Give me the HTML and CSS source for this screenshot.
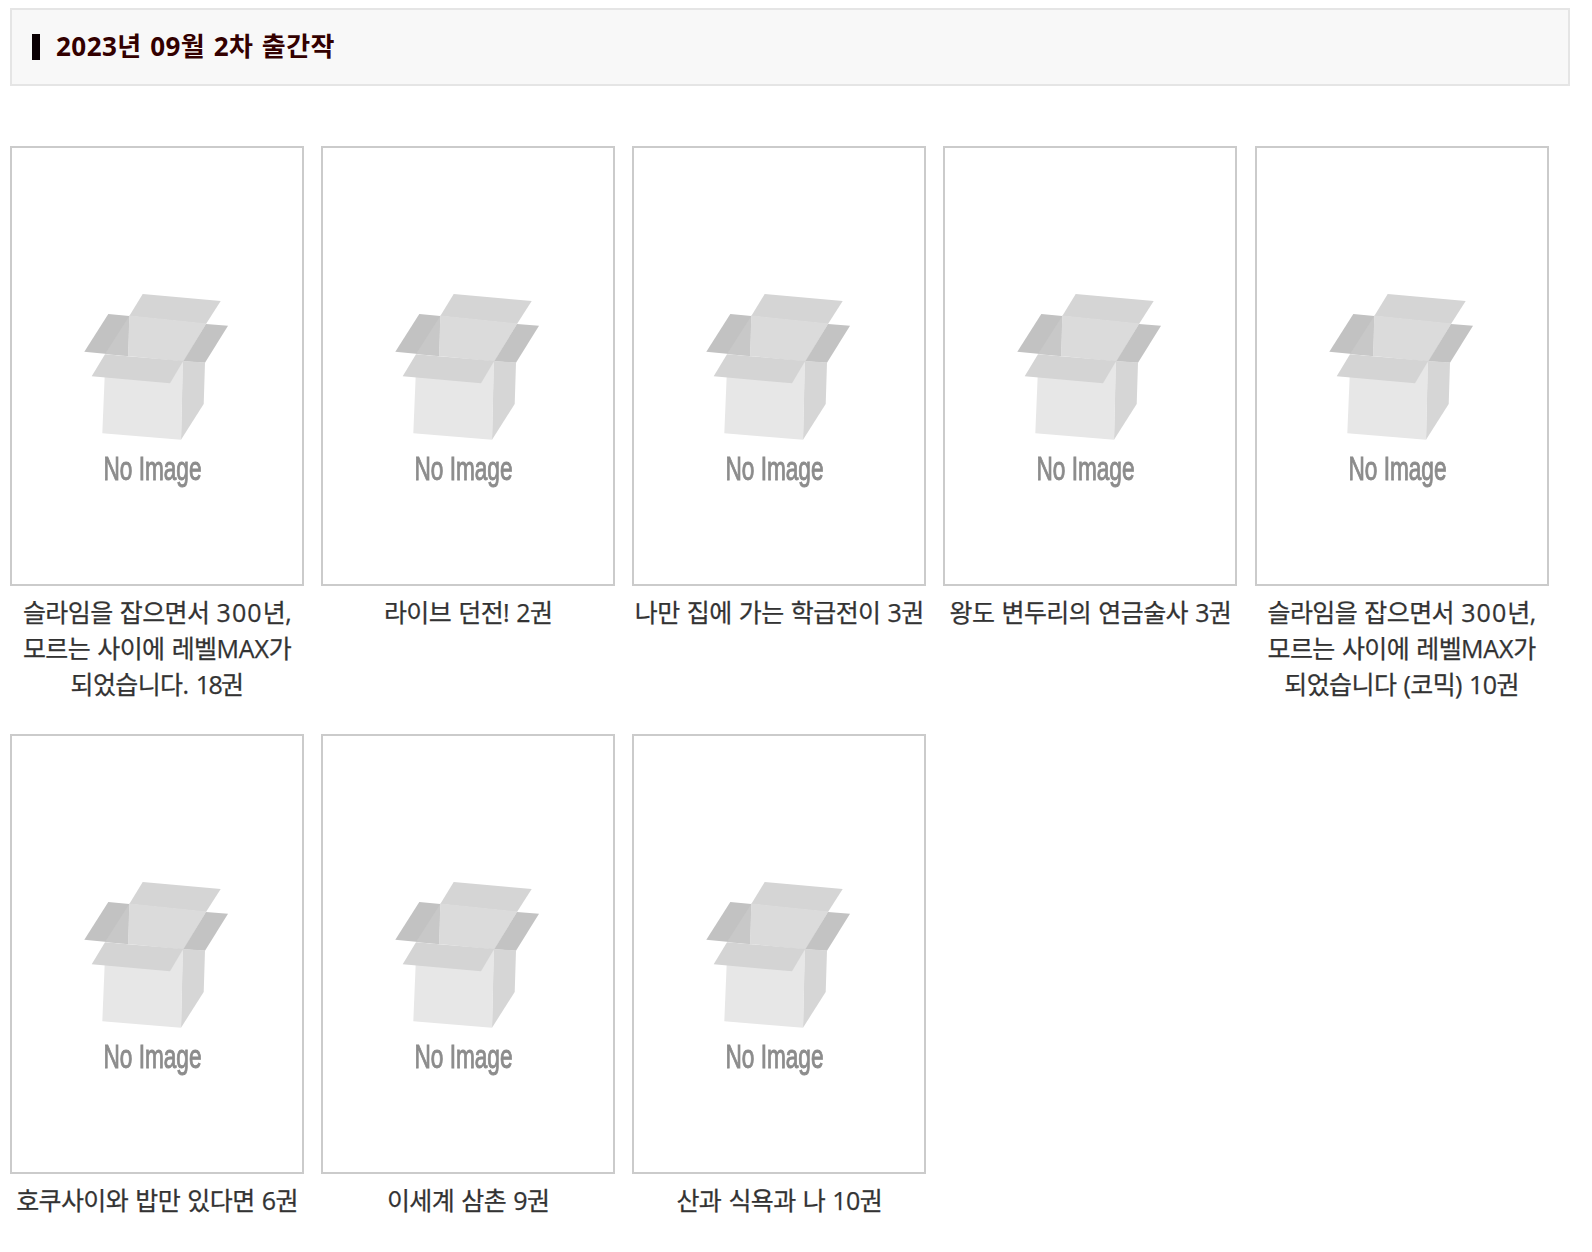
FILE: index.html
```
<!DOCTYPE html>
<html lang="ko">
<head>
  <meta charset="utf-8">
  <meta name="viewport" content="width=device-width">
  <title>2023년 09월 2차 출간작</title>
  <link rel="stylesheet" href="styles.css">
</head>
<body>
  <svg class="defs" width="0" height="0">
    <symbol id="no-image" viewBox="0 0 290 436" overflow="visible">
      <path fill="#d5d5d5" d="M130.7 146l78 7-14.7 23-76.7-8z"/>
      <path fill="#c2c2c2" d="M96.3 166l21 2-1.3 40-43.7-4.3z"/>
      <path fill="#c8c8c8" d="M117.3 168L116 208l-23-2z"/>
      <path fill="#dbdbdb" d="M117.3 167.5l77 8-22.7 38L116 208z"/>
      <path fill="#c3c3c3" d="M194 176l22 1.7-23 37-21.7-1.4z"/>
      <path fill="#d6d6d6" d="M170.7 213l22.3 1.4-1.3 41.6-22.7 35.7z"/>
      <path fill="#e7e7e7" d="M92.7 228l65.3 6 13-21-2 78.7-78.7-6.4z"/>
      <path fill="#d4d4d4" d="M93 206.2l78.3 6.8L158 235.3l-78.3-7z"/>
      <text class="no-image-text" x="91.5" y="332" textLength="98" lengthAdjust="spacingAndGlyphs">No Image</text>
    </symbol>
  </svg>

  <h2 class="title">2023년 09월 2차 출간작</h2>

  <ul class="books">
    <li class="book">
      <svg class="cover"><use href="#no-image"/></svg>
      <p class="name">슬라임을 잡으면서 <span class="num">300</span>년,<br>모르는 사이에 레벨<span class="latin">MAX</span>가<br>되었습니다. <span class="narrow">18</span>권</p>
    </li>
    <li class="book">
      <svg class="cover"><use href="#no-image"/></svg>
      <p class="name">라이브 던전! 2권</p>
    </li>
    <li class="book">
      <svg class="cover"><use href="#no-image"/></svg>
      <p class="name">나만 집에 가는 학급전이 3권</p>
    </li>
    <li class="book">
      <svg class="cover"><use href="#no-image"/></svg>
      <p class="name">왕도 변두리의 연금술사 3권</p>
    </li>
    <li class="book">
      <svg class="cover"><use href="#no-image"/></svg>
      <p class="name">슬라임을 잡으면서 <span class="num">300</span>년,<br>모르는 사이에 레벨<span class="latin">MAX</span>가<br>되었습니다 (코믹) 10권</p>
    </li>
    <li class="book">
      <svg class="cover"><use href="#no-image"/></svg>
      <p class="name">호쿠사이와 밥만 있다면 6권</p>
    </li>
    <li class="book">
      <svg class="cover"><use href="#no-image"/></svg>
      <p class="name">이세계 삼촌 9권</p>
    </li>
    <li class="book">
      <svg class="cover"><use href="#no-image"/></svg>
      <p class="name">산과 식욕과 나 10권</p>
    </li>
  </ul>
</body>
</html>
```
FILE: styles.css
```
* {
  box-sizing: border-box;
}

body {
  margin: 0;
  padding: 8px 22px 0 10px;
  background: #fff;
  color: #333;
  font-family: "Open Sans", "Noto Sans CJK KR", sans-serif;
}

.defs {
  display: block;
}

.title {
  display: flex;
  align-items: center;
  height: 78px;
  margin: 0 0 60px;
  padding: 0 20px 4px;
  border: 2px solid #e5e5e5;
  background: #f8f8f8;
  color: #300;
  font-size: 26px;
  font-weight: bold;
  letter-spacing: 0.45px;
  word-spacing: 1.3px;
}

.title:before {
  content: "";
  width: 8px;
  height: 26px;
  margin: 4px 16px 0 0;
  background: #0a0003;
}

.books {
  display: grid;
  grid-template-columns: repeat(5, 294px);
  gap: 32px 17.15px;
  margin: 0;
  padding: 0;
  list-style: none;
}

.cover {
  display: block;
  width: 294px;
  height: 440px;
  border: 2px solid #cbcbcb;
}

/* soft edges, as in the thumbnail */
.cover use {
  filter: blur(0.5px);
}

.no-image-text {
  fill: #8c8c8c;
  font-family: "Liberation Sans", sans-serif;
  font-size: 34px;
  stroke: #8c8c8c;
  stroke-width: 1px;
}

.name {
  margin: 8px 0 0;
  font-size: 25px;
  line-height: 36px;
  letter-spacing: -0.6px;
  word-spacing: 1.3px;
  text-align: center;
  white-space: nowrap;
  -webkit-text-stroke: 0.25px #333;
}

.num {
  letter-spacing: 1.1px;
}

.latin {
  letter-spacing: -0.2px;
}

.narrow {
  letter-spacing: -1.6px;
}
```
